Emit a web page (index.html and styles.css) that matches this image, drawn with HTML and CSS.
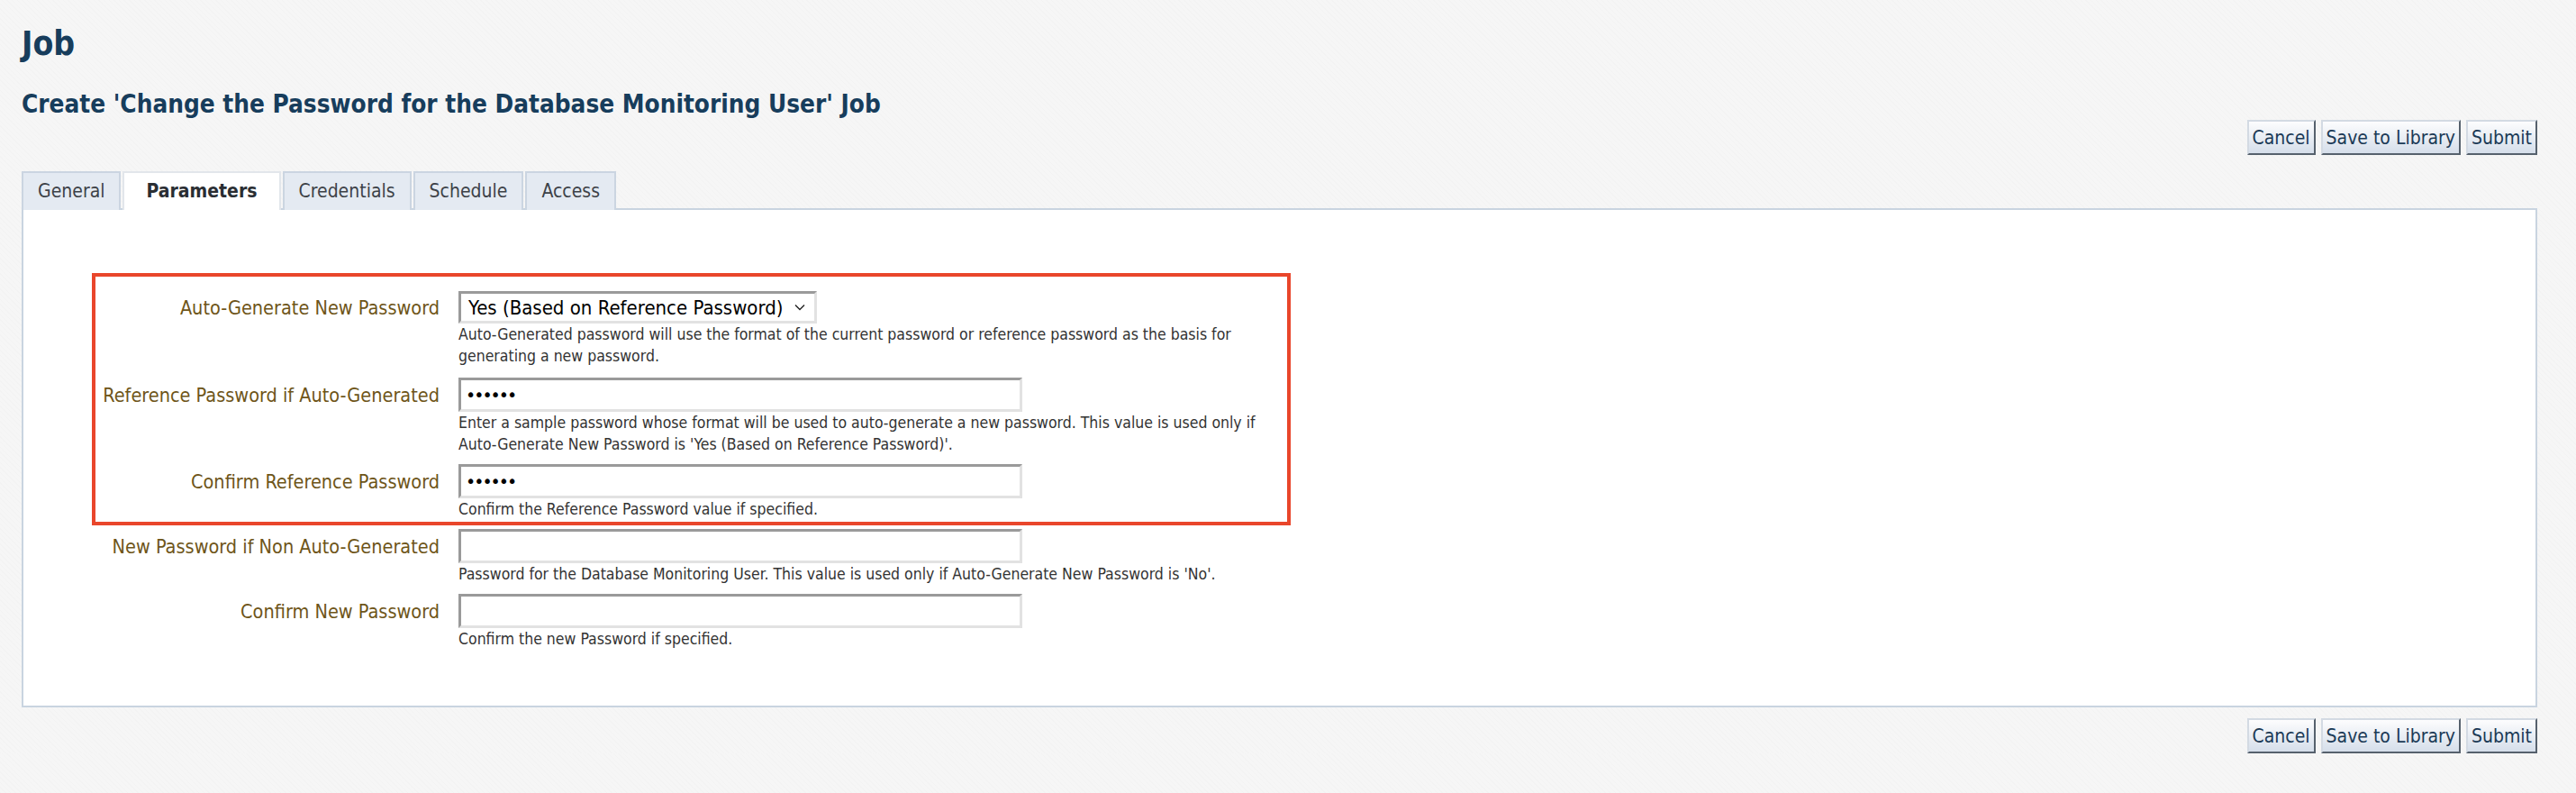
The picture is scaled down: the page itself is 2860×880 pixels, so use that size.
FILE: index.html
```html
<!DOCTYPE html>
<html lang="en">
<head>
<meta charset="utf-8">
<title>Job</title>
<link rel="stylesheet" href="styles.css">
</head>
<body>
<div class="page">
  <h1 class="title">Job</h1>
  <h2 class="subtitle">Create 'Change the Password for the Database Monitoring User' Job</h2>
  <div class="actions actions-top">
    <button class="btn" type="button">Cancel</button>
    <button class="btn" type="button">Save to Library</button>
    <button class="btn" type="button">Submit</button>
  </div>
  <div class="tabs">
    <div class="tab">General</div>
    <div class="tab active">Parameters</div>
    <div class="tab">Credentials</div>
    <div class="tab">Schedule</div>
    <div class="tab">Access</div>
  </div>
  <div class="panel">
    <div class="highlight"></div>
    <div class="form">
      <div class="label label-select">Auto-Generate New Password</div>
      <div class="field">
        <div class="select">
          <span class="select-text">Yes (Based on Reference Password)</span>
          <svg class="chevron" width="12" height="8" viewBox="0 0 12 8"><path d="M1 1.5 L6 6.5 L11 1.5" fill="none" stroke="#222" stroke-width="1.4"/></svg>
        </div>
        <div class="help help-select">Auto-Generated password will use the format of the current password or reference password as the basis for<br>generating a new password.</div>
      </div>

      <div class="label">Reference Password if Auto-Generated</div>
      <div class="field">
        <input class="input" type="password" value="secret">
        <div class="help">Enter a sample password whose format will be used to auto-generate a new password. This value is used only if<br>Auto-Generate New Password is 'Yes (Based on Reference Password)'.</div>
      </div>

      <div class="label">Confirm Reference Password</div>
      <div class="field">
        <input class="input" type="password" value="secret">
        <div class="help">Confirm the Reference Password value if specified.</div>
      </div>

      <div class="label">New Password if Non Auto-Generated</div>
      <div class="field">
        <input class="input" type="password" value="">
        <div class="help">Password for the Database Monitoring User. This value is used only if Auto-Generate New Password is 'No'.</div>
      </div>

      <div class="label">Confirm New Password</div>
      <div class="field">
        <input class="input" type="password" value="">
        <div class="help">Confirm the new Password if specified.</div>
      </div>
    </div>
  </div>
  <div class="actions actions-bottom">
    <button class="btn" type="button">Cancel</button>
    <button class="btn" type="button">Save to Library</button>
    <button class="btn" type="button">Submit</button>
  </div>
</div>
</body>
</html>
```

FILE: styles.css
```css
html, body {
  margin: 0;
  padding: 0;
}

body {
  background-color: #f5f5f5;
  background-image: repeating-linear-gradient(45deg, #f3f3f3 0px, #f3f3f3 1px, #f6f6f6 1px, #f6f6f6 4px);
  font-family: "DejaVu Sans Condensed", "DejaVu Sans", sans-serif;
  font-stretch: condensed;
  color: #333;
}

.page {
  padding: 25px 43px 0 24px;
}

.title {
  margin: 0;
  font-size: 37px;
  line-height: 48px;
  font-weight: bold;
  color: #173d5c;
}

.subtitle {
  margin: 27px 0 0 0;
  font-size: 27.7px;
  line-height: 32px;
  font-weight: bold;
  color: #173d5c;
}

.actions {
  display: flex;
  justify-content: flex-end;
  gap: 6px;
}

.actions-top {
  margin-top: 1px;
}

.actions-bottom {
  margin-top: 12px;
}

.btn {
  height: 39px;
  padding: 0 4px;
  font-family: inherit;
  font-stretch: condensed;
  font-size: 21px;
  color: #1b3a56;
  background: linear-gradient(#fdfdfe, #d5deea);
  border-style: solid;
  border-width: 2px;
  border-color: #d3dae3 #56616d #56616d #d3dae3;
  border-radius: 0;
  cursor: pointer;
}

.tabs {
  display: flex;
  gap: 2px;
  margin-top: 18px;
  margin-bottom: -2px;
  position: relative;
  z-index: 1;
}

.tab {
  height: 43px;
  box-sizing: border-box;
  padding: 0 16px 2px 16px;
  display: flex;
  align-items: center;
  font-size: 21px;
  color: #3d4248;
  background: #e4eaf2;
  border: 2px solid #cbd5e1;
  border-bottom: none;
}

.tab.active {
  background: #ffffff;
  border-color: #e2e6eb;
  font-weight: bold;
  color: #2a2e33;
  padding: 0 24px 2px 24px;
}

.panel {
  position: relative;
  background: #ffffff;
  border: 2px solid #c9d4e0;
  padding: 90px 0 62px 0;
}

.highlight {
  position: absolute;
  left: 76px;
  top: 70px;
  width: 1331px;
  height: 280px;
  box-sizing: border-box;
  border: 4px solid #e9462b;
  pointer-events: none;
}

.form {
  display: grid;
  grid-template-columns: 462px 1fr;
  column-gap: 21px;
  row-gap: 10px;
}

.label {
  height: 38px;
  display: flex;
  align-items: center;
  justify-content: flex-end;
  font-size: 21.5px;
  color: #6e5519;
  white-space: nowrap;
}

.label-select {
  height: 36px;
}

.field {
  display: flex;
  flex-direction: column;
  align-items: flex-start;
}

.select {
  width: 398px;
  height: 36px;
  box-sizing: border-box;
  display: flex;
  align-items: center;
  justify-content: space-between;
  padding: 0 10px 0 8px;
  background: #ffffff;
  border-style: solid;
  border-width: 3px;
  border-color: #9a9a9a #e2e2e2 #e2e2e2 #9a9a9a;
}

.select-text {
  font-size: 22px;
  color: #000;
  white-space: nowrap;
}

.input {
  width: 626px;
  height: 38px;
  box-sizing: border-box;
  margin: 0;
  padding: 0 5px;
  background: #ffffff;
  border-style: solid;
  border-width: 3px;
  border-color: #9a9a9a #e2e2e2 #e2e2e2 #9a9a9a;
  font-family: "DejaVu Sans", sans-serif;
  font-size: 19px;
  letter-spacing: -2px;
  color: #000;
  outline: none;
}

.help {
  font-size: 17.5px;
  line-height: 24px;
  color: #333;
  white-space: nowrap;
}

.help-select {
  margin-top: 0;
  margin-bottom: 2px;
}
```
